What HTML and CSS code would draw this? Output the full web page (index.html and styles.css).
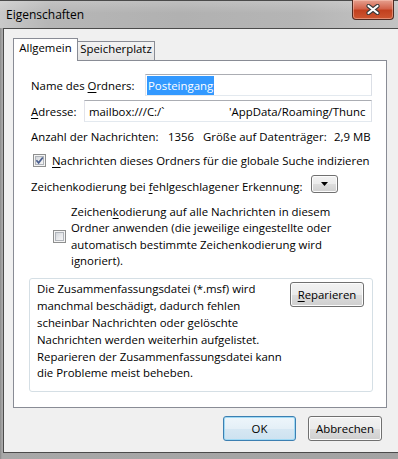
FILE: index.html
```html
<!DOCTYPE html>
<html lang="de">

<head>
    <meta charset="UTF-8">
    <meta name="viewport" content="width=device-width, initial-scale=1.0">
    <title>Eigenschaften</title>
    <link rel="stylesheet" href="styles.css">
</head>

<body>
    <div class="window">
        <!--Title bar-->
        <div class="titlebar">
            <span class="title">Eigenschaften</span>
            <div class="close-btn">
                <svg width="14" height="11" viewBox="0 0 14 11">
                    <path d="M2.5 2 L11.5 9 M11.5 2 L2.5 9" stroke="#3a3a3a" stroke-width="4.2" stroke-linecap="round" fill="none" />
                    <path d="M2.5 2 L11.5 9 M11.5 2 L2.5 9" stroke="#ffffff" stroke-width="2.2" stroke-linecap="round" fill="none" />
                </svg>
            </div>
        </div>

        <div class="client">
            <!--Tabs-->
            <div class="tabs">
                <div class="tab active">Allgemein</div>
                <div class="tab">Speicherplatz</div>
            </div>

            <div class="panel">
                <div class="row name-row">
                    <span class="name-lbl">Name des <u>O</u>rdners:</span>
                    <div class="textbox name-box"><span class="selected">Posteingang</span></div>
                </div>

                <div class="row addr-row">
                    <span class="addr-lbl"><u>A</u>dresse:</span>
                    <div class="textbox addr-box">
                        <span class="addr-start">mailbox:///C:/`</span><span>'AppData/Roaming/Thunc</span>
                    </div>
                </div>

                <div class="row count-row">
                    <span class="count-lbl">Anzahl der Nachrichten:</span>
                    <span class="count-val">1356</span>
                    <span class="size-lbl">Größe auf Datenträger:</span>
                    <span>2,9 MB</span>
                </div>

                <div class="row check-row">
                    <div class="checkbox">
                        <div class="checkbox-inner">
                            <svg width="9" height="9" viewBox="0 0 9 9">
                                <path d="M1.4 4.3 L3.6 6.8 L7.8 1.4" stroke="#4b5f8f" stroke-width="1.7" fill="none" />
                            </svg>
                        </div>
                    </div>
                    <span class="check-lbl"><u>N</u>achrichten dieses Ordners für die globale Suche indizieren</span>
                </div>

                <div class="row enc-row">
                    <span class="enc-lbl">Zeichenkodierung bei <u>f</u>ehlgeschlagener Erkennung:</span>
                    <div class="dropbtn">
                        <svg width="7" height="4" viewBox="0 0 7 4">
                            <polygon points="0,0 7,0 3.5,4" fill="#000" />
                        </svg>
                    </div>
                </div>

                <div class="row multi-row">
                    <div class="checkbox multi-check">
                        <div class="checkbox-inner"></div>
                    </div>
                    <span class="multi-lbl">Zeichen<u>k</u>odierung auf alle Nachrichten in diesem<br>Ordner anwenden (die jeweilige eingestellte oder<br>automatisch bestimmte Zeichenkodierung wird<br>ignoriert).</span>
                </div>

                <!--Repair box-->
                <div class="groupbox">
                    <p class="repair-text">Die Zusammenfassungsdatei (*.msf) wird<br>manchmal beschädigt, dadurch fehlen<br>scheinbar Nachrichten oder gelöschte<br>Nachrichten werden weiterhin aufgelistet.<br>Reparieren der Zusammenfassungsdatei kann<br>die Probleme meist beheben.</p>
                    <button class="btn repair-btn"><u>R</u>eparieren</button>
                </div>
            </div>

            <div class="dialog-buttons">
                <button class="btn default ok-btn">OK</button>
                <button class="btn cancel-btn">Abbrechen</button>
            </div>
        </div>
    </div>
</body>

</html>
```

FILE: styles.css
```css
* {
    margin: 0;
    padding: 0;
    box-sizing: border-box;
}

body {
    width: 398px;
    height: 459px;
    overflow: hidden;
    font-family: 'Open Sans', 'Segoe UI', sans-serif;
    font-size: 11.4px;
    color: #000;
    background: #9d9d9d;
}

u {
    text-decoration: underline;
    text-underline-offset: 2px;
}

.window {
    width: 398px;
    height: 459px;
    display: flex;
    flex-direction: column;
    background: linear-gradient(90deg, #8a8a8a 0px, #a8a8a8 2px, #a3a3a3 100%);
}

/* Title bar */
.titlebar {
    height: 28px;
    flex: none;
    display: flex;
    align-items: flex-start;
    border-top: 1px solid #4a4a4a;
    background:
        linear-gradient(180deg, rgba(255, 255, 255, 0.18), rgba(255, 255, 255, 0) 45%),
        linear-gradient(90deg, #c9c9c9 0%, #b6b6b6 12%, #b1b1b1 45%, #b5b5b5 75%, #c3c3c3 100%);
}

.title {
    margin: 6px 0 0 6px;
    font-size: 12px;
    line-height: 15px;
}

.close-btn {
    margin: -1px 4px 0 auto;
    width: 42px;
    height: 20px;
    border: 1px solid #4f2a22;
    border-top: none;
    border-radius: 0 0 4px 4px;
    background: linear-gradient(180deg, #e6a08f 0%, #d3644c 45%, #c2401f 55%, #cd5631 100%);
    box-shadow: inset 0 0 0 1px rgba(255, 210, 195, 0.45);
    display: flex;
    align-items: center;
    justify-content: center;
}

/* Client area */
.client {
    flex: 1;
    margin: 0 0 6px 3px;
    border: 1px solid #4b4b4b;
    border-right: none;
    background: #f0f0f0;
    padding: 9px 0 0 9px;
}

.tabs {
    display: flex;
    align-items: flex-end;
    height: 22px;
}

.tab {
    width: 77px;
    height: 19px;
    line-height: 14px;
    text-align: center;
    border: 1px solid #898c95;
    border-left: none;
    border-bottom: none;
    background: linear-gradient(180deg, #f3f3f3, #e4e4e4);
}

.tab.active {
    width: 65px;
    height: 23px;
    line-height: 18px;
    border-left: 1px solid #898c95;
    background: #fff;
    margin-bottom: -1px;
    position: relative;
    z-index: 1;
}

.panel {
    width: 374px;
    height: 348px;
    border: 1px solid #898c95;
    background: #fff;
    padding: 0 14px 0 17px;
}

.row {
    display: flex;
    align-items: center;
    white-space: nowrap;
}

.name-row {
    margin-top: 13px;
    height: 22px;
}

.name-lbl {
    width: 114px;
}

.textbox {
    flex: 1;
    height: 22px;
    border: 1px solid;
    border-color: #abadb3 #dbdfe6 #e3e9ef #e2e3ea;
    display: flex;
    align-items: center;
    overflow: hidden;
    white-space: nowrap;
}

.name-box {
    padding-left: 1px;
}

.selected {
    background: #3399ff;
    color: #fff;
    line-height: 19px;
    padding: 0 1px;
}

.addr-row {
    margin-top: 4px;
    height: 22px;
}

.addr-lbl {
    width: 53px;
}

.addr-box {
    padding-left: 4px;
}

.addr-start {
    display: inline-block;
    width: 140px;
    flex: none;
}

.count-row {
    margin-top: 4px;
    height: 20px;
}

.count-lbl {
    width: 137px;
}

.count-val {
    width: 35px;
}

.size-lbl {
    width: 131px;
}

.check-row {
    margin-top: 4px;
    height: 20px;
}

.checkbox {
    width: 13px;
    height: 13px;
    flex: none;
    border: 1px solid #8e8f8f;
    background: #f4f4f4;
    padding: 1px;
    margin-left: 2px;
}

.checkbox-inner {
    width: 9px;
    height: 9px;
    background: linear-gradient(135deg, #cdd1d7 0%, #e9eaec 55%, #f8f8f8 100%);
    box-shadow: inset 0 0 0 1px #b0b4ba;
}

.checkbox-inner svg {
    display: block;
}

.check-lbl {
    margin-left: 6px;
}

.enc-row {
    margin-top: 6px;
    height: 20px;
}

.enc-lbl {
    width: 280px;
}

.dropbtn {
    align-self: flex-start;
    margin-top: -1px;
    width: 27px;
    height: 18px;
    border: 1px solid #707070;
    border-radius: 3px;
    background: linear-gradient(180deg, #f2f2f2 0%, #ebebeb 50%, #dddddd 51%, #cfcfcf 100%);
    box-shadow: inset 0 0 0 1px #fcfcfc;
    display: flex;
    align-items: center;
    justify-content: center;
}

.multi-row {
    margin-top: 8px;
}

.multi-check {
    margin-left: 22px;
}

.multi-lbl {
    margin-left: 5px;
    line-height: 16.33px;
}

.groupbox {
    margin: 9px -1px 0 -2px;
    height: 114px;
    border: 1px solid #d5dfe5;
    border-radius: 3px;
    padding: 2px 8px 0 7px;
    display: flex;
    align-items: flex-start;
    justify-content: space-between;
}

.repair-text {
    line-height: 16.8px;
    white-space: nowrap;
}

/* Buttons */
.btn {
    font: inherit;
    color: #000;
    height: 25px;
    border: 1px solid #707070;
    border-radius: 3px;
    background: linear-gradient(180deg, #f2f2f2 0%, #ebebeb 50%, #dddddd 51%, #cfcfcf 100%);
    box-shadow: inset 0 0 0 1px #fcfcfc;
    cursor: pointer;
}

.repair-btn {
    width: 74px;
    margin-top: 1px;
}

.dialog-buttons {
    display: flex;
    justify-content: flex-end;
    gap: 12px;
    margin-top: 8px;
    padding-right: 16px;
}

.ok-btn {
    width: 73px;
}

.cancel-btn {
    width: 74px;
}

.btn.default {
    border-color: #3c7fb1;
    background: linear-gradient(180deg, #eef6fb 0%, #e4eff7 50%, #d6e7f3 51%, #cde2f0 100%);
    box-shadow: inset 0 0 0 1px #9fd9f4;
}
```
